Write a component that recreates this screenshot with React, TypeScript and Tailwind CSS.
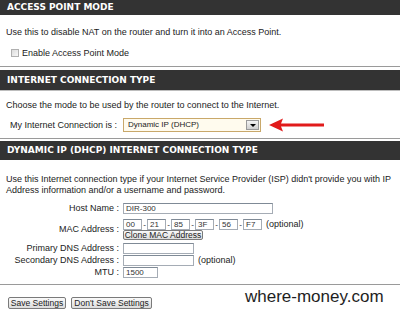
import type { ReactNode } from 'react';

const body = { fontFamily: '"Liberation Sans", Arial, sans-serif' };
const head = { fontFamily: '"DejaVu Sans", Verdana, sans-serif' };

function Bar({ text, h }: { text: string; h: string }) {
  return (
    <div className={`flex items-center bg-[#333333] pl-[7px] ${h}`}>
      <span className="text-[9px] font-bold uppercase leading-none text-white" style={head}>{text}</span>
    </div>
  );
}

function Field({ w, value = '' }: { w: string; value?: string }) {
  return (
    <div className={`flex h-[11px] items-center border border-[#a5acb5] border-t-[#7f8a96] bg-white pl-[2px] text-[8px] leading-none text-[#333] ${w}`}>
      {value}
    </div>
  );
}

function Btn({ children, w, h = 'h-[12px]' }: { children: ReactNode; w: string; h?: string }) {
  return (
    <div className={`flex items-center justify-center rounded-[2px] border border-[#7a7a7a] bg-gradient-to-b from-[#fafafa] to-[#dcdcdc] text-[8.5px] leading-none text-[#222] ${w} ${h}`}>
      {children}
    </div>
  );
}

function Row({ label, children }: { label: string; children: ReactNode }) {
  return (
    <div className="flex h-[11px] items-center">
      <div className="w-[123px] shrink-0 pr-[4px] text-right">{label}</div>
      {children}
    </div>
  );
}

export default function App() {
  const mac = ['00', '21', '85', '3F', '56', 'F7'];
  return (
    <div className="relative h-[313px] w-[400px] overflow-hidden bg-white text-[9px] leading-[12px] text-[#222]" style={body}>
      {/* Access point mode */}
      <Bar text="Access Point Mode" h="h-[15px]" />
      <div className="border-b border-[#9a9a9a] pb-[7px] pl-[6px]">
        <p className="mt-[11px]">Use this to disable NAT on the router and turn it into an Access Point.</p>
        <div className="mt-[9px] flex items-center gap-[3px] pl-[5px]">
          <span className="h-[8px] w-[8px] border border-[#b0b0b0] bg-gradient-to-br from-[#dcdcdc] to-[#f8f8f8]" />
          <span>Enable Access Point Mode</span>
        </div>
      </div>

      {/* Internet connection type */}
      <div className="mt-[3px]">
        <Bar text="Internet Connection Type" h="h-[20px]" />
      </div>
      <div className="border-t border-b border-t-[#bdbdbd] border-b-[#9a9a9a] pb-[6px]">
        <p className="mt-[8px] pl-[6px]">Choose the mode to be used by the router to connect to the Internet.</p>
        <div className="mt-[7px] flex items-center pl-[10px]">
          <span className="w-[113px] shrink-0">My Internet Connection is :</span>
          <div className="flex h-[14px] w-[138px] items-center justify-between border border-[#c9a86a] bg-[#fffbee] pl-[4px] pr-[1px] text-[8px] leading-none">
            <span>Dynamic IP (DHCP)</span>
            <span className="flex h-[10px] w-[13px] items-center justify-center border border-[#9a9a9a] bg-gradient-to-b from-[#f4f4f4] to-[#cfcfcf]">
              <span className="h-0 w-0 border-x-[3px] border-t-[3px] border-x-transparent border-t-black" />
            </span>
          </div>
          <svg className="ml-[8px]" width="56" height="14" viewBox="0 0 56 14">
            <path d="M0 7 L14 0.5 L12 5.5 L55 5.5 L55 8.5 L12 8.5 L14 13.5 Z" fill="#e11b1b" />
          </svg>
        </div>
      </div>

      {/* Dynamic IP */}
      <div className="mt-[2px]">
        <Bar text="Dynamic IP (DHCP) Internet Connection Type" h="h-[19px]" />
      </div>
      <div className="border-b border-[#9a9a9a] pb-[6px] leading-[11px]">
        <p className="mt-[14px] pl-[6px]">
          Use this Internet connection type if your Internet Service Provider (ISP) didn't provide you with IP<br />
          Address information and/or a username and password.
        </p>
        <div className="mt-[7px] flex flex-col gap-[1px]">
          <Row label="Host Name :">
            <Field w="w-[150px]" value="DIR-300" />
          </Row>
          <div className="mt-[4px] flex items-center">
            <div className="w-[123px] shrink-0 pr-[4px] text-right">MAC Address :</div>
            <div className="flex flex-col">
              <div className="flex h-[11px] items-center">
                {mac.map((m, i) => (
                  <div key={m} className="flex items-center">
                    {i > 0 && <span className="w-[5px] text-center text-[8px]">-</span>}
                    <Field w="w-[19px]" value={m} />
                  </div>
                ))}
                <span className="ml-[4px]">(optional)</span>
              </div>
              <Btn w="w-[80px]" h="h-[10px]">Clone MAC Address</Btn>
            </div>
          </div>
          <div className="mt-[2px]">
            <Row label="Primary DNS Address :">
              <Field w="w-[71px]" />
            </Row>
          </div>
          <Row label="Secondary DNS Address :">
            <Field w="w-[71px]" />
            <span className="ml-[4px]">(optional)</span>
          </Row>
          <Row label="MTU :">
            <Field w="w-[35px]" value="1500" />
          </Row>
        </div>
      </div>

      <div className="mt-[12px] flex gap-[5px] pl-[8px]">
        <Btn w="w-[58px]">Save Settings</Btn>
        <Btn w="w-[81px]">Don't Save Settings</Btn>
      </div>

      <div className="absolute left-[245px] top-[287px] text-[17px] leading-[20px] text-[#1e1e1e]">where-money.com</div>
    </div>
  );
}
